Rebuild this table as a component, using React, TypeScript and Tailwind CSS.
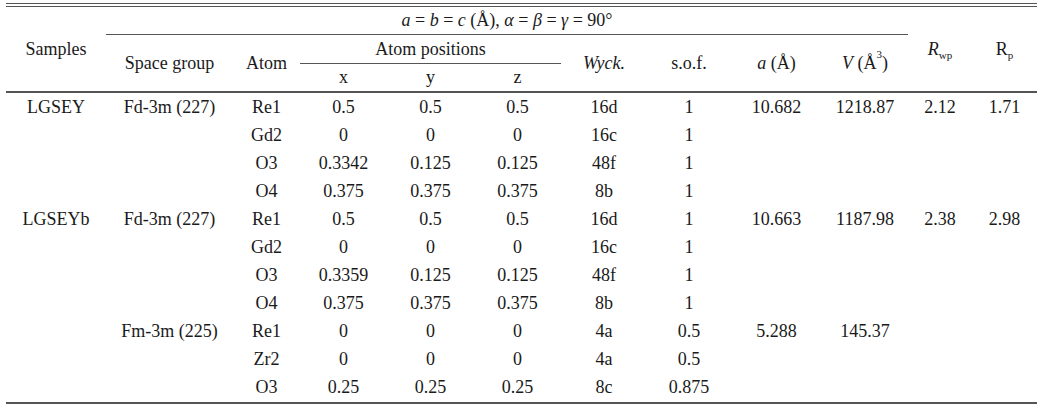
type Row = {
  s?: string;
  sg?: string;
  atom: string;
  x: string;
  y: string;
  z: string;
  w: string;
  sof: string;
  a?: string;
  v?: string;
  rwp?: string;
  rp?: string;
};

const rows: Row[] = [
  { s: "LGSEY", sg: "Fd-3m (227)", atom: "Re1", x: "0.5", y: "0.5", z: "0.5", w: "16d", sof: "1", a: "10.682", v: "1218.87", rwp: "2.12", rp: "1.71" },
  { atom: "Gd2", x: "0", y: "0", z: "0", w: "16c", sof: "1" },
  { atom: "O3", x: "0.3342", y: "0.125", z: "0.125", w: "48f", sof: "1" },
  { atom: "O4", x: "0.375", y: "0.375", z: "0.375", w: "8b", sof: "1" },
  { s: "LGSEYb", sg: "Fd-3m (227)", atom: "Re1", x: "0.5", y: "0.5", z: "0.5", w: "16d", sof: "1", a: "10.663", v: "1187.98", rwp: "2.38", rp: "2.98" },
  { atom: "Gd2", x: "0", y: "0", z: "0", w: "16c", sof: "1" },
  { atom: "O3", x: "0.3359", y: "0.125", z: "0.125", w: "48f", sof: "1" },
  { atom: "O4", x: "0.375", y: "0.375", z: "0.375", w: "8b", sof: "1" },
  { sg: "Fm-3m (225)", atom: "Re1", x: "0", y: "0", z: "0", w: "4a", sof: "0.5", a: "5.288", v: "145.37" },
  { atom: "Zr2", x: "0", y: "0", z: "0", w: "4a", sof: "0.5" },
  { atom: "O3", x: "0.25", y: "0.25", z: "0.25", w: "8c", sof: "0.875" },
];

const widths = [100, 127, 67, 87, 87, 87, 86, 84, 91, 86, 64, 65];

export default function App() {
  const hb = "font-normal border-b-2 border-[#555]";

  return (
    <div className="w-[1044px] h-[407px] bg-white pl-[6px] pt-[3px] text-[18px] text-[#1a1a1a] [font-family:'Liberation_Serif',serif]">
      {/* double rule on top */}
      <div className="w-[1031px] border-t border-[#555]">
        <div className="mt-[2px] border-t border-[#555]">
          <table className="w-[1031px] table-fixed border-separate border-spacing-0 text-center">
            <colgroup>
              {widths.map((w, i) => (
                <col key={i} style={{ width: w }} />
              ))}
            </colgroup>
            <thead>
              <tr className="h-[28px]">
                <th rowSpan={3} className={hb}>Samples</th>
                <th colSpan={9} className="font-normal border-b border-[#555]">
                  <i>a</i> = <i>b</i> = <i>c</i> (Å), <i>α</i> = <i>β</i> = <i>γ</i> = 90°
                </th>
                <th rowSpan={3} className={hb}>
                  <i>R</i>
                  <sub className="text-[11px] align-[-2px]">wp</sub>
                </th>
                <th rowSpan={3} className={hb}>
                  R<sub className="text-[11px] align-[-2px]">p</sub>
                </th>
              </tr>
              <tr className="h-[29px]">
                <th rowSpan={2} className={hb}>Space group</th>
                <th rowSpan={2} className={hb}>Atom</th>
                <th colSpan={3} className="font-normal border-b border-[#555]">Atom positions</th>
                <th rowSpan={2} className={hb}>
                  <i>Wyck.</i>
                </th>
                <th rowSpan={2} className={hb}>s.o.f.</th>
                <th rowSpan={2} className={hb}>
                  <i>a</i> (Å)
                </th>
                <th rowSpan={2} className={hb}>
                  <i>V</i> (Å<sup className="text-[11px] align-[5px]">3</sup>)
                </th>
              </tr>
              <tr className="h-[29px]">
                <th className={hb}>x</th>
                <th className={hb}>y</th>
                <th className={hb}>z</th>
              </tr>
            </thead>
            <tbody>
              {rows.map((r, i) => {
                const last = i === rows.length - 1;
                const td = last ? "p-0 border-b-2 border-[#555]" : "p-0";
                return (
                  <tr key={i} className={last ? "h-[31px]" : "h-[28px]"}>
                    <td className={td}>{r.s}</td>
                    <td className={td}>{r.sg}</td>
                    <td className={td}>{r.atom}</td>
                    <td className={td}>{r.x}</td>
                    <td className={td}>{r.y}</td>
                    <td className={td}>{r.z}</td>
                    <td className={td}>{r.w}</td>
                    <td className={td}>{r.sof}</td>
                    <td className={td}>{r.a}</td>
                    <td className={td}>{r.v}</td>
                    <td className={td}>{r.rwp}</td>
                    <td className={td}>{r.rp}</td>
                  </tr>
                );
              })}
            </tbody>
          </table>
        </div>
      </div>
    </div>
  );
}
